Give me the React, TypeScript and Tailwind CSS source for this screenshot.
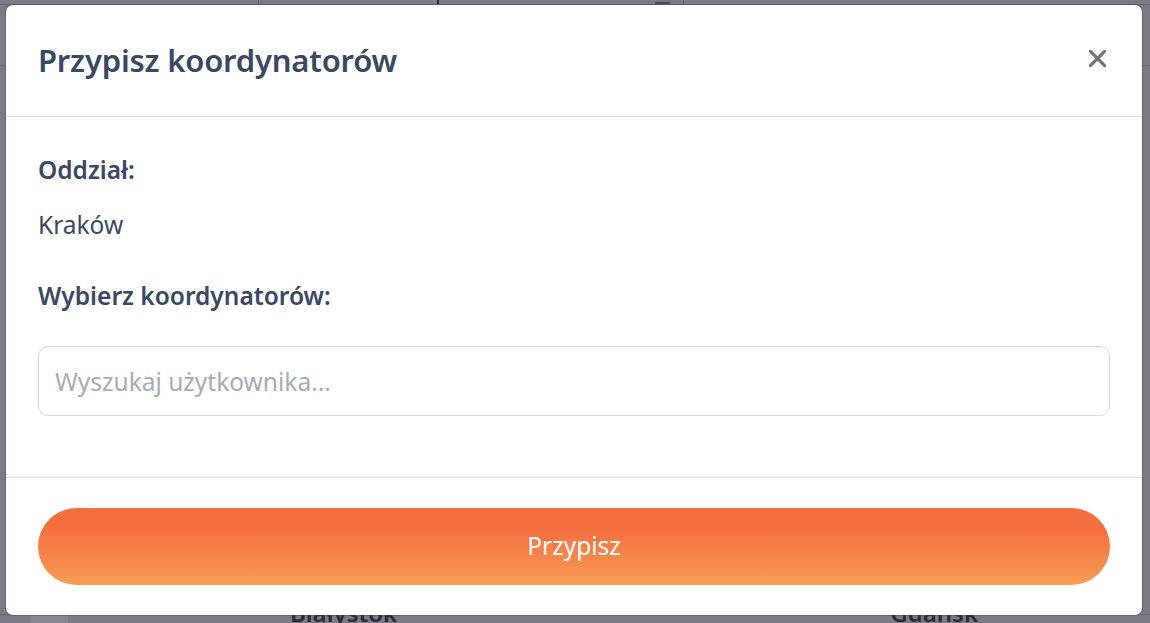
import React from "react";

export default function App() {
  return (
    <div
      className="relative h-[623px] w-[1150px] overflow-hidden bg-[#7b7b86]"
      style={{ fontFamily: '"Noto Sans", "Open Sans", sans-serif' }}
    >
      {/* backdrop page (under the modal overlay) */}
      <div className="flex h-full flex-col">
        <div className="flex h-[5px] shrink-0 border-b border-[#6a6a74]">
          <div className="w-[259px] border-r border-[#66666f]" />
          <div className="w-[180px] border-r-2 border-[#2f2f38]" />
          <div className="flex w-[245px] items-end justify-end border-r border-[#66666f] pr-[13px]">
            <div className="h-[2px] w-[15px] bg-[#4a4a54]" />
          </div>
        </div>
        <div className="h-[61px] shrink-0 border-b border-[#6a6a74]" />
        <div className="flex-1 border-b border-[#6a6a74]" />
        <div className="flex h-[8px] shrink-0 items-start">
          <div className="ml-[30px] h-full w-[38px] bg-[#86868f]" />
          <div className="ml-[222px] -mt-[17px] text-[24px] font-semibold leading-[30px] text-[#2a2a35]">Białystok</div>
          <div className="ml-auto mr-[172px] -mt-[17px] text-[24px] font-semibold leading-[30px] text-[#2a2a35]">Gdańsk</div>
        </div>
      </div>

      {/* modal */}
      <div className="absolute left-[6px] top-[5px] flex h-[610px] w-[1136px] flex-col rounded-[7px] bg-white shadow-[0_0_0_1px_rgba(60,60,70,0.35)]">
        <div className="flex h-[112px] shrink-0 items-center justify-between border-b border-[#e0e0e3] pl-8 pr-[35px]">
          <h2 className="text-[31px] font-semibold tracking-[-0.2px] text-[#3a4864]">Przypisz koordynatorów</h2>
          <button className="mb-[5px] flex h-5 w-5 items-center justify-center text-[#707079]">
            <svg width="19" height="19" viewBox="0 0 20 20" fill="none" stroke="currentColor" strokeWidth="3.2" strokeLinecap="round">
              <path d="M2.5 2.5 L17.5 17.5 M17.5 2.5 L2.5 17.5" />
            </svg>
          </button>
        </div>
        <div className="flex flex-1 flex-col px-8 pt-[37px] text-[#3a4864]">
          <div className="text-[24.5px] font-semibold leading-[32px]">Oddział:</div>
          <div className="mt-[23px] text-[24.5px] leading-[32px]">Kraków</div>
          <div className="mt-[39px] text-[24.5px] font-semibold leading-[32px]">Wybierz koordynatorów:</div>
          <input
            className="mt-[34px] h-[70px] w-full rounded-[10px] border border-[#d5d8de] px-4 text-[24.5px] text-[#3a4864] outline-none placeholder:text-[#a5abb7]"
            placeholder="Wyszukaj użytkownika..."
          />
        </div>
        <div className="flex h-[138px] shrink-0 items-center border-t border-[#e0e0e3] px-8">
          <button className="h-[77px] w-full rounded-full bg-gradient-to-b from-[#f3703e] from-30% to-[#f89d56] text-[24.5px] text-white">
            Przypisz
          </button>
        </div>
      </div>
    </div>
  );
}
